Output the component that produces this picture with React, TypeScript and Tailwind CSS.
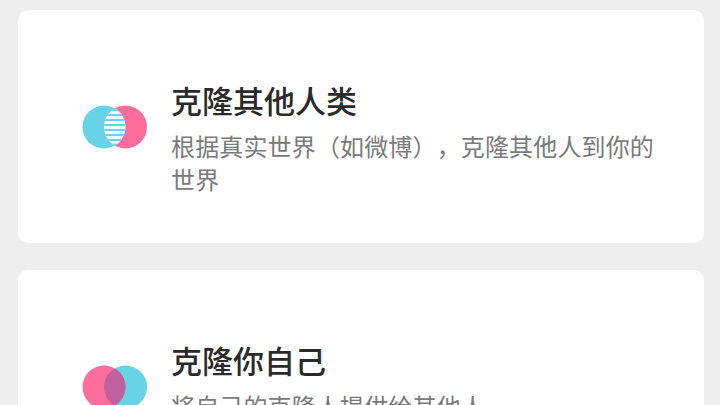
const cjk = { fontFamily: '"Noto Sans CJK SC", "Noto Sans", sans-serif' };

const lens = "M32.75 3.4A21.5 21.5 0 0 1 32.75 40.6A21.5 21.5 0 0 1 32.75 3.4Z";

function StripedIcon() {
  return (
    <svg width="66" height="44" viewBox="0 0 66 44" className="shrink-0">
      <defs>
        <clipPath id="lens">
          <path d={lens} />
        </clipPath>
      </defs>
      <circle cx="43.5" cy="22" r="21.5" fill="#fd6d9c" />
      <circle cx="22" cy="22" r="21.5" fill="#68d3e8" />
      <g clipPath="url(#lens)">
        <rect x="20" y="3" width="26" height="38" fill="#fff" />
        <g fill="#68d3e8">
          <rect x="20" y="3" width="26" height="3" />
          <rect x="20" y="9" width="26" height="2" />
          <rect x="20" y="14" width="26" height="2" />
          <rect x="20" y="19" width="26" height="2" />
          <rect x="20" y="24" width="26" height="2" />
          <rect x="20" y="29" width="26" height="2" />
          <rect x="20" y="34" width="26" height="2" />
          <rect x="20" y="38.5" width="26" height="3" />
        </g>
      </g>
    </svg>
  );
}

function OverlapIcon() {
  return (
    <svg width="66" height="44" viewBox="0 0 66 44" className="shrink-0">
      <circle cx="43.5" cy="22" r="21.5" fill="#68d3e8" />
      <circle cx="22" cy="22" r="21.5" fill="#fd6d9c" />
      <path d={lens} fill="#c0609c" />
    </svg>
  );
}

function Card({
  icon,
  title,
  desc,
  className
}: {
  icon: React.ReactNode;
  title: string;
  desc: string;
  className: string;
}) {
  return (
    <div className={`flex shrink-0 rounded-[10px] bg-white pl-[64px] pr-[48px] ${className}`}>
      <div className="mt-[95px] w-[89px] shrink-0">{icon}</div>
      <div className="pt-[71px]">
        <h2 className="text-[31px] leading-[38px] font-medium text-[#2a2a2a]">{title}</h2>
        <p className="mt-[10px] text-[24px] leading-[33px] tracking-[0.15px] text-[#7a7a7a] [text-spacing-trim:space-all]">{desc}</p>
      </div>
    </div>
  );
}

export default function App() {
  return (
    <div style={cjk} className="flex h-[405px] w-[720px] flex-col gap-[27px] overflow-hidden bg-[#eeeeee] pt-[10px] pr-[16px] pl-[18px]">
      <Card
        className="h-[233px]"
        icon={<StripedIcon />}
        title="克隆其他人类"
        desc="根据真实世界（如微博），克隆其他人到你的世界"
      />
      <Card
        className="h-[233px]"
        icon={<OverlapIcon />}
        title="克隆你自己"
        desc="将自己的克隆人提供给其他人"
      />
    </div>
  );
}
